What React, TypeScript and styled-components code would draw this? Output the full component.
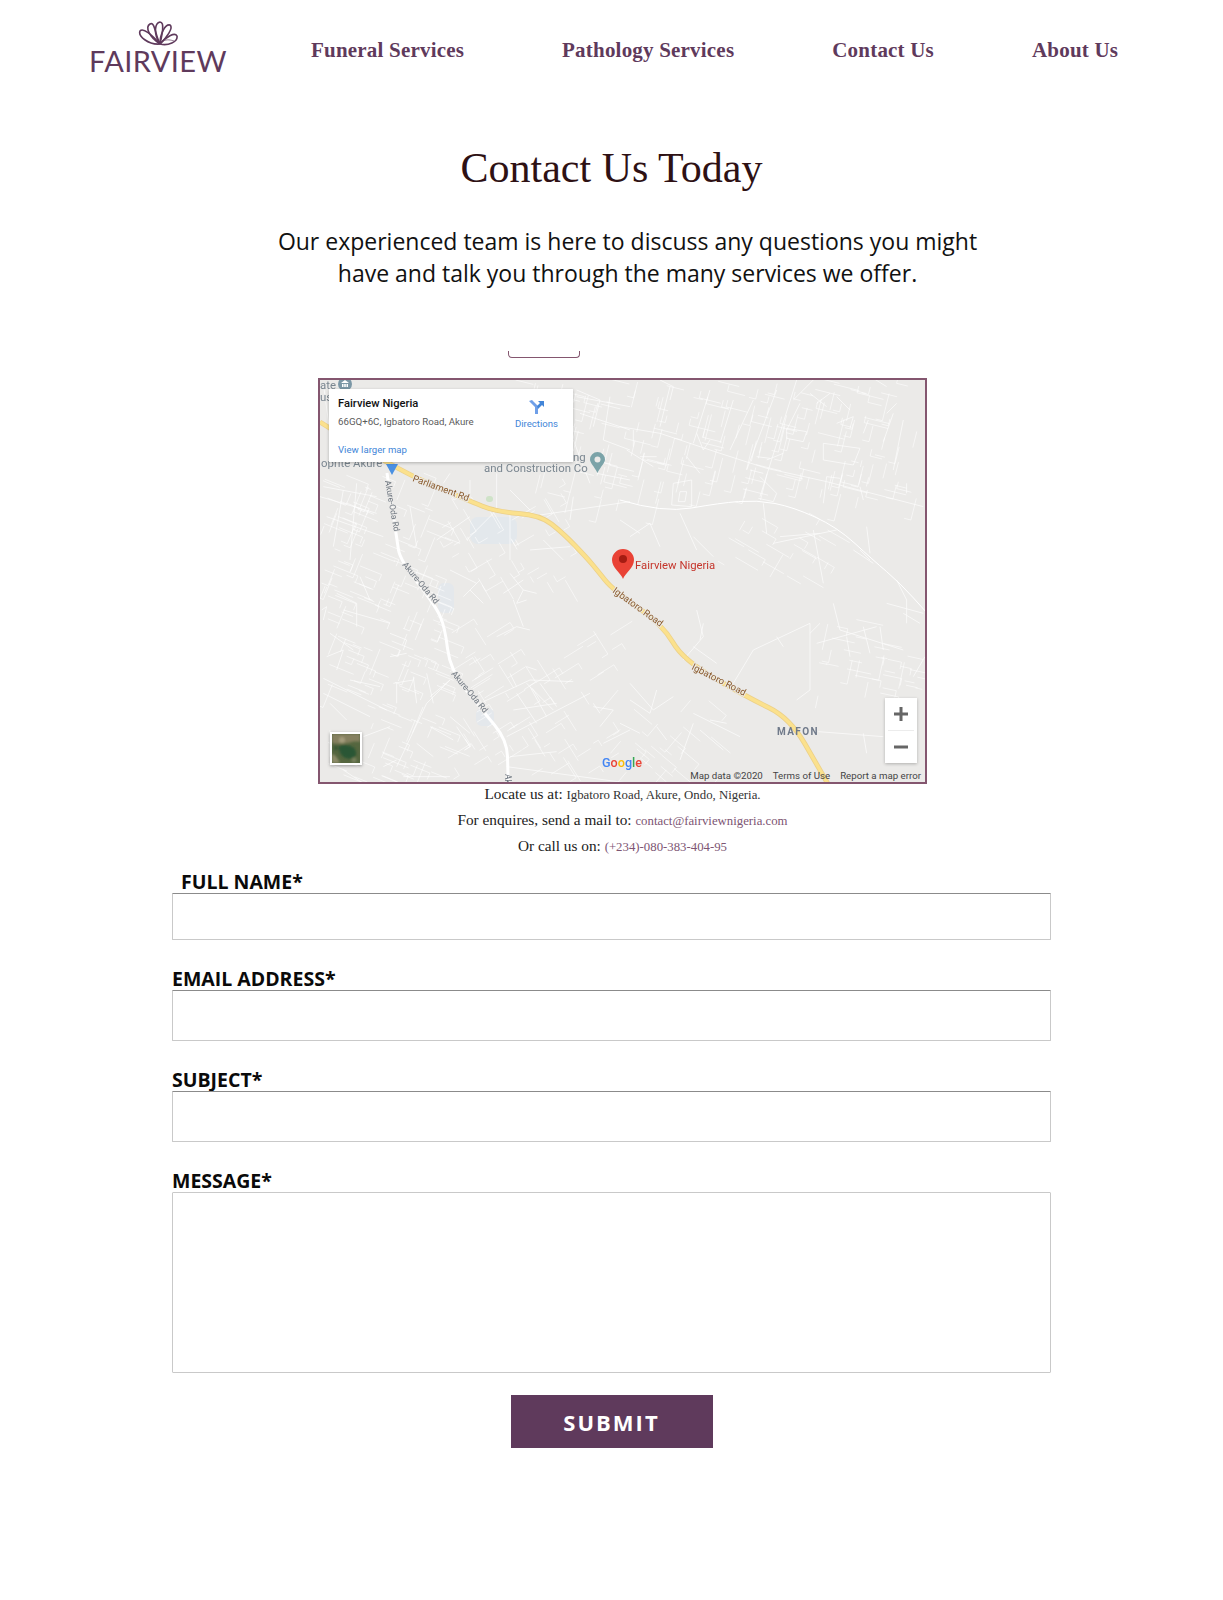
import styled, { createGlobalStyle } from 'styled-components';

const PLUM = '#5f3a5c';
const FRAME = '#84566f';

const NAV_ITEMS = ['Funeral Services', 'Pathology Services', 'Contact Us', 'About Us'];

// street lines read off the reference, in 3x crop coordinates per zone
const ZONE_A = [
  'M800 170L960 200', 'M810 220L960 270', 'M900 170L880 300', 'M800 150L870 180L850 260', 'M420 400L400 430',
  'M560 400L560 510', 'M690 525L960 485', 'M790 300L840 430', 'M480 420L480 490', 'M30 470L200 520',
  'M40 440L200 470', 'M600 450L660 510', 'M50 530L220 590', 'M100 450L70 620', 'M140 430L120 660',
  'M380 600L480 530', 'M470 600L560 510', 'M660 630L780 620', 'M700 600L760 660', 'M790 470L780 540',
  'M300 500L320 620', 'M600 520L600 660', 'M40 130L60 280', 'M880 300L960 330', 'M860 400L960 420',
];
const ZONE_B = [
  'M0 170L120 190L300 250L440 295L620 335L910 410', 'M530 30L420 380', 'M470 60L380 300', 'M400 90L330 240',
  'M340 90L300 220', 'M270 60L220 220', 'M150 50L120 170', 'M500 175L560 185L550 215L500 205Z',
  'M610 220L720 235L700 285L610 270Z', 'M160 340L215 330L215 410L155 405Z', 'M180 365L200 365L195 395L175 395Z',
  'M420 320L470 370L460 395L415 385', 'M430 400L440 490', 'M460 520L650 480', 'M480 500L600 490',
  'M580 480L610 640', 'M620 320L660 325', 'M620 320L610 400', 'M720 350L730 390', 'M800 130L830 100',
  'M820 300L850 150', 'M790 215L820 130', 'M730 190L745 150', 'M650 160L700 140L690 175', 'M520 90L590 20',
  'M720 0L800 50', 'M120 30L160 50L150 90', 'M230 190L250 240L270 210', 'M390 300L430 310', 'M410 260L450 265',
  'M440 270L490 250', 'M500 180L540 100', 'M570 70L620 110', 'M590 100L630 70', 'M0 450L60 490',
  'M30 500L90 460L120 530', 'M220 500L280 560', 'M180 430L230 540', 'M720 540L750 570', 'M740 470L750 550',
  'M700 540L760 580', 'M20 240L100 290', 'M40 180L40 230', 'M60 260L110 260', 'M200 260L240 310', 'M650 80L690 120',
  'M860 340L860 370',
];
const ZONE_C = [
  'M560 200L620 170L660 180', 'M610 90L640 170', 'M620 100L650 90', 'M640 60L680 70', 'M600 10L640 60L620 100',
  'M420 0L500 40', 'M510 30L460 80', 'M580 70L640 30', 'M360 380L420 330', 'M260 590L350 400L420 330',
  'M510 400L660 330L790 335', 'M590 500L840 370', 'M610 420L740 400', 'M650 290L680 300', 'M650 340L730 420',
  'M620 370L680 460', 'M660 350L710 440', 'M690 340L740 410', 'M600 310L620 350', 'M60 190L130 240',
  'M50 260L100 240L80 300', 'M240 190L290 210L280 240', 'M240 260L290 250', 'M35 120L50 110L40 150',
  'M80 70L140 100L140 170', 'M40 325L230 420', 'M60 400L110 450', 'M250 340L310 330', 'M260 340L260 400',
  'M310 320L320 400', 'M350 310L370 400', 'M360 470L430 510', 'M320 520L370 560', 'M440 470L480 530',
  'M590 590L960 640', 'M220 590L260 570', 'M100 600L160 640', 'M280 620L420 620', 'M420 440L480 490',
  'M600 560L740 545', 'M880 520L960 480', 'M850 410L910 420L870 470', 'M850 400L870 430', 'M100 120L240 160',
  'M150 20L180 90', 'M40 370L180 440', 'M160 500L240 470', 'M60 480L60 560', 'M120 330L210 350', 'M480 60L520 100',
];
const ZONE_D = [
  'M30 310L100 390', 'M30 360L90 400L110 330', 'M100 390L160 350', 'M110 440L140 480', 'M220 400L360 470',
  'M270 420L320 430', 'M240 450L310 510', 'M190 240L250 170L230 90', 'M220 200L290 250', 'M240 180L250 130',
  'M340 310L400 210L570 130', 'M470 170L490 200', 'M530 360L570 330L570 130', 'M590 190L770 140',
  'M640 70L660 150L850 210', 'M680 170L690 230', 'M730 140L750 220', 'M780 140L790 210', 'M830 0L860 60L860 130',
  'M800 70L910 100', 'M850 100L900 130', 'M880 290L915 230', 'M595 455L790 470', 'M730 460L740 520',
  'M180 540L220 430', 'M0 430L60 460', 'M600 130L570 160',
];

const ZONES = [
  { id: 'a', transform: 'translate(-8 -38) scale(.3333)', paths: ZONE_A },
  { id: 'b', transform: 'translate(302 -8) scale(.3333)', paths: ZONE_B },
  { id: 'c', transform: 'translate(-8 192) scale(.3333)', paths: ZONE_C },
  { id: 'd', transform: 'translate(302 202) scale(.3333)', paths: ZONE_D },
];

// fine side streets: short stubs scattered along the district's grid direction
const makeStreets = (x: number, y: number, w: number, h: number, angle: number, count: number, seed: number) => {
  let state = seed;
  const next = () => {
    state = (state * 16807) % 2147483647;
    return state / 2147483647;
  };
  let d = '';
  for (let i = 0; i < count; i++) {
    const px = x + next() * w;
    const py = y + next() * h;
    const dir = ((next() > 0.35 ? angle : angle + 90) * Math.PI) / 180;
    const len = 6 + next() * 22;
    const ex = px + Math.cos(dir) * len;
    const ey = py + Math.sin(dir) * len;
    d += `M${px.toFixed(1)} ${py.toFixed(1)}L${ex.toFixed(1)} ${ey.toFixed(1)}`;
    if (next() > 0.55) {
      const side = dir + Math.PI / 2;
      d += `L${(ex + Math.cos(side) * 7).toFixed(1)} ${(ey + Math.sin(side) * 7).toFixed(1)}`;
    }
  }
  return d;
};

const SIDE_STREETS = [
  makeStreets(215, 4, 385, 118, 104, 210, 11),
  makeStreets(5, 95, 125, 305, 22, 190, 23),
  makeStreets(130, 250, 170, 150, -32, 80, 37),
  makeStreets(130, 100, 120, 110, 60, 40, 41),
  makeStreets(500, 240, 105, 80, 12, 34, 53),
  makeStreets(400, 130, 120, 70, 30, 24, 59),
  makeStreets(300, 310, 120, 90, 40, 24, 61),
].join('');

const smoothPath = (points: number[][]) => {
  let d = `M${points[0].join(' ')}`;
  for (let i = 1; i < points.length - 1; i++) {
    const mx = (points[i][0] + points[i + 1][0]) / 2;
    const my = (points[i][1] + points[i + 1][1]) / 2;
    d += `Q${points[i].join(' ')} ${mx} ${my}`;
  }
  return `${d}L${points[points.length - 1].join(' ')}`;
};

const IGBATORO_ROAD = smoothPath([
  [2, 44], [75, 90], [149, 122], [179, 134], [222, 137], [245, 155], [269, 180], [279, 192], [295, 212],
  [345, 247], [365, 282], [429, 319], [472, 340], [502, 392], [510, 406],
]);
const ODA_ROAD = smoothPath([
  [69, 95], [79, 162], [82, 182], [117, 227], [127, 249], [132, 292], [164, 332], [189, 362], [190, 395], [190, 406],
]);
const NORTH_ROAD = smoothPath([
  [302, 122], [345, 135], [402, 125], [439, 122], [475, 129], [519, 149], [555, 182], [582, 205], [609, 235],
]);

const ROAD_LABELS = [
  { text: 'Parliament Rd', x: 94, y: 103, angle: 20, size: 9.5 },
  { text: 'Akure-Oda Rd', x: 67, y: 103, angle: 80, size: 8.5 },
  { text: 'Akure-Oda Rd', x: 84, y: 187, angle: 50, size: 8.5 },
  { text: 'Akure-Oda Rd', x: 133, y: 296, angle: 50, size: 8.5 },
  { text: 'Igbatoro Road', x: 294, y: 214, angle: 36, size: 9.5 },
  { text: 'Igbatoro Road', x: 373, y: 291, angle: 27, size: 9.5 },
];

const GlobalStyle = createGlobalStyle`
  body {
    margin: 0;
    background: #fff;
    font-family: 'Open Sans', sans-serif;
  }
`;

const Page = styled.div`
  width: 1223px;
  height: 1600px;
  overflow: hidden;
`;

const Header = styled.header`
  display: flex;
  align-items: center;
  height: 100px;
  padding-left: 90px;
`;

const Logo = styled.div`
  display: flex;
  flex-direction: column;
  align-items: center;
  width: 136px;
  margin-top: -6px;
`;

const LogoWord = styled.span`
  font-family: Lato, sans-serif;
  font-size: 29px;
  line-height: 25px;
  letter-spacing: 0.4px;
  color: ${PLUM};
  margin-top: 2px;
`;

const Nav = styled.nav`
  display: flex;
  gap: 98px;
  margin-left: 85px;
`;

const NavLink = styled.a`
  font-family: 'Liberation Serif', serif;
  font-size: 21px;
  font-weight: 700;
  letter-spacing: 0.2px;
  color: ${PLUM};
  white-space: nowrap;
`;

const Title = styled.h1`
  margin: 44px 0 0;
  text-align: center;
  font-family: 'Liberation Serif', serif;
  font-size: 42px;
  line-height: 48px;
  font-weight: 400;
  color: #2e1114;
`;

const Intro = styled.p`
  margin: 34px 0 0;
  padding-left: 32px;
  text-align: center;
  font-size: 23px;
  line-height: 31.5px;
  color: #111;
`;

const MapTab = styled.div`
  box-sizing: border-box;
  width: 72px;
  height: 7px;
  margin: 62px 0 0 508px;
  border: 1px solid ${FRAME};
  border-top: 0;
  border-radius: 0 0 4px 4px;
`;

const MapFrame = styled.div`
  position: relative;
  box-sizing: border-box;
  width: 609px;
  height: 406px;
  margin: 20px 0 0 318px;
  border: 2px solid ${FRAME};
  background: #ebeae8;
  overflow: hidden;
  font-family: Roboto, sans-serif;
`;

const MapDrawing = styled.svg`
  position: absolute;
  left: -2px;
  top: -2px;
  filter: blur(0.3px);
`;

const Popup = styled.div`
  position: absolute;
  left: 9px;
  top: 9px;
  width: 244px;
  height: 73px;
  box-sizing: border-box;
  padding: 8px 9px;
  background: #fff;
  box-shadow: 0 1px 3px rgba(0, 0, 0, 0.25);
`;

const PopupName = styled.div`
  font-size: 11.2px;
  line-height: 13px;
  font-weight: 500;
  color: #111;
`;

const PopupAddress = styled.div`
  margin-top: 6px;
  font-size: 9.7px;
  line-height: 12px;
  color: #5b5b5b;
`;

const PopupLink = styled.div`
  margin-top: 16px;
  font-size: 9.6px;
  line-height: 12px;
  color: #4285d8;
`;

const Directions = styled.div`
  position: absolute;
  right: 15px;
  top: 10px;
  display: flex;
  flex-direction: column;
  align-items: center;
  gap: 3px;
  font-size: 9.6px;
  line-height: 12px;
  color: #4285d8;
`;

const ZoomControl = styled.div`
  position: absolute;
  right: 8px;
  bottom: 19px;
  width: 32px;
  height: 65px;
  display: flex;
  flex-direction: column;
  align-items: center;
  background: #fff;
  box-shadow: 0 1px 3px rgba(0, 0, 0, 0.25);
`;

const ZoomButton = styled.div`
  width: 26px;
  height: 32px;
  display: flex;
  align-items: center;
  justify-content: center;
  & + & {
    border-top: 1px solid #ececec;
  }
`;

const Thumb = styled.svg`
  position: absolute;
  left: 10px;
  top: 352px;
  box-sizing: border-box;
  width: 32px;
  height: 33px;
  border: 2px solid #fff;
  box-shadow: 0 1px 3px rgba(0, 0, 0, 0.35);
`;

const Attribution = styled.div`
  position: absolute;
  right: 4px;
  bottom: 0;
  display: flex;
  gap: 10px;
  padding-left: 2px;
  font-size: 9.7px;
  line-height: 12px;
  color: #444;
`;

const Contacts = styled.div`
  display: flex;
  flex-direction: column;
  gap: 6px;
  width: 609px;
  margin-left: 318px;
  text-align: center;
`;

const ContactLine = styled.div`
  font-family: 'Liberation Serif', serif;
  font-size: 15.3px;
  line-height: 20px;
  color: #222;
`;

const ContactValue = styled.span<{ $link?: boolean }>`
  font-size: 12.8px;
  line-height: 1;
  color: ${(p) => (p.$link ? '#7d5573' : '#333')};
`;

const Form = styled.form`
  display: flex;
  flex-direction: column;
  gap: 25px;
  width: 879px;
  margin: 12px 0 0 172px;
`;

const Field = styled.div`
  display: flex;
  flex-direction: column;
`;

const Label = styled.label<{ $inset?: boolean }>`
  height: 25px;
  padding-left: ${(p) => (p.$inset ? '9px' : '0')};
  font-size: 19.5px;
  line-height: 27px;
  font-weight: 700;
  color: #0a0a0a;
`;

const TextInput = styled.input<{ $tall?: boolean }>`
  display: block;
  box-sizing: border-box;
  width: 100%;
  height: ${(p) => (p.$tall ? '51px' : '47px')};
  margin: 0;
  padding: 0 10px;
  background: #fff;
  border: 1px solid #c9c9c9;
  border-top-color: #8b8b8b;
  border-radius: 1px;
`;

const MessageInput = styled.textarea`
  display: block;
  box-sizing: border-box;
  width: 100%;
  height: 181px;
  margin: 0;
  padding: 10px;
  background: #fff;
  border: 1px solid #c9c9c9;
  border-radius: 1px;
  resize: none;
`;

const Submit = styled.button`
  align-self: center;
  width: 202px;
  height: 53px;
  margin-top: -3px;
  border: 0;
  background: ${PLUM};
  color: #fff;
  font-family: 'Open Sans', sans-serif;
  font-size: 22px;
  font-weight: 700;
  letter-spacing: 2px;
`;

const FlowerMark = () => (
  <svg width="40" height="25" viewBox="0 0 40 25" fill="none" stroke={PLUM} strokeWidth="1.6">
    <path d="M22 23C10 24 0 15 2 10 5 6 14 14 22 23" />
    <path d="M22 23C11 16 7 6 12 3 17 0 17 14 22 23" />
    <path d="M22 23C15 12 17 2 22 1 27 1 24 14 22 23" />
    <path d="M22 23C22 13 27 3 32 4 36 7 28 17 22 23" />
    <path d="M22 23C29 15 37 11 39 15 40 21 30 25 22 23" />
    <path d="M25 20C29 18 33 19 36 20" strokeWidth=".7" />
  </svg>
);

const RoadMap = () => (
  <MapDrawing width="609" height="406" viewBox="0 0 609 406">
    <rect x="152" y="139" width="47" height="27" rx="8" fill="#e3e8ec" />
    <rect x="120" y="205" width="16" height="30" rx="6" fill="#e4e8ec" />
    <rect x="158" y="330" width="18" height="18" rx="6" fill="#e4e8ec" />
    <rect x="168" y="118" width="7" height="6" rx="3" fill="#cfe3c8" />
    <path d={SIDE_STREETS} fill="none" stroke="#fff" strokeWidth=".8" opacity=".7" />
    {ZONES.map((zone) => (
      <g key={zone.id} transform={zone.transform} fill="none" stroke="#fff" strokeWidth="2.4" opacity=".8">
        {zone.paths.map((d) => (
          <path key={d} d={d} />
        ))}
      </g>
    ))}
    <path d={NORTH_ROAD} fill="none" stroke="#fff" strokeWidth="1" />
    <path d={ODA_ROAD} fill="none" stroke="#fff" strokeWidth="3" />
    <path d={IGBATORO_ROAD} fill="none" stroke="#ecd088" strokeWidth="5" />
    <path d={IGBATORO_ROAD} fill="none" stroke="#fbe18d" strokeWidth="3.4" />
    {ROAD_LABELS.map((label) => (
      <text
        key={`${label.text}${label.x}`}
        x={label.x}
        y={label.y}
        transform={`rotate(${label.angle} ${label.x} ${label.y})`}
        fontSize={label.size}
        fill={label.text.startsWith('Akure') ? '#6f7780' : '#8a5a2b'}
        stroke="#ebeae8"
        strokeWidth="2"
        paintOrder="stroke"
      >
        {label.text}
      </text>
    ))}
    <text x="187" y="396" transform="rotate(90 187 396)" fontSize="8.5" fill="#6f7780">Ak</text>
    <g fontSize="11.4" fill="#7a8690" stroke="#ebeae8" strokeWidth="1.5" paintOrder="stroke">
      <text x="2" y="11">ate</text>
      <text x="2" y="23">us</text>
      <text x="3" y="89">oprite Akure</text>
      <text x="255" y="83">ng</text>
      <text x="166" y="94">and Construction Co</text>
    </g>
    <circle cx="27" cy="6" r="7" fill="#7b97a6" />
    <path d="M23 5L27 2 31 5ZM24 6H25.5V9H24ZM26.2 6H27.8V9H26.2ZM28.5 6H30V9H28.5Z" fill="#fff" />
    <path d="M279.5 95C276 88 272 85 272 81.5A7.5 7.5 0 1 1 287 81.5C287 85 283 88 279.5 95Z" fill="#7ba3a8" />
    <circle cx="279.5" cy="81.5" r="3" fill="#ebeae8" />
    <path d="M68 86H80L74 97Z" fill="#4a90e2" />
    <path d="M305 201C303 195 294 190 294 182A11 11 0 1 1 316 182C316 190 307 195 305 201Z" fill="#e94235" />
    <circle cx="305" cy="181" r="4" fill="#a51c12" />
    <text x="317" y="191" fontSize="11.3" fill="#c5352b" stroke="#ebeae8" strokeWidth="2" paintOrder="stroke">
      Fairview Nigeria
    </text>
    <text x="459" y="357" fontSize="10" fontWeight="700" letterSpacing="1.4" fill="#707a8a">MAFON</text>
    <text x="284" y="389" fontSize="12.6" fontWeight="500">
      <tspan fill="#4285f4">G</tspan>
      <tspan fill="#ea4335">o</tspan>
      <tspan fill="#fbbc05">o</tspan>
      <tspan fill="#4285f4">g</tspan>
      <tspan fill="#34a853">l</tspan>
      <tspan fill="#ea4335">e</tspan>
    </text>
  </MapDrawing>
);

const DirectionsIcon = () => (
  <svg width="16" height="16" viewBox="0 0 16 16" fill="#6f9fe8">
    <path d="M1 2L7 8V15H10V7L4 1Z" />
    <path d="M9 7L12 4 10 2H16V8L14 6 10 10Z" fill="#4285d8" />
  </svg>
);

const SatelliteThumb = () => (
  <Thumb viewBox="0 0 28 29">
    <defs>
      <filter id="thumb-blur">
        <feGaussianBlur stdDeviation="1" />
      </filter>
    </defs>
    <rect width="28" height="29" fill="#55663f" />
    <g filter="url(#thumb-blur)">
      <path d="M0 0H28V8C20 6 14 12 0 9Z" fill="#85805f" />
      <path d="M7 12C14 9 26 12 24 21 20 28 6 25 7 12Z" fill="#2c5636" />
      <path d="M0 20C4 21 6 25 8 29H0Z" fill="#8c8a68" />
      <circle cx="10" cy="6" r="3" fill="#a39c7c" />
      <circle cx="22" cy="26" r="2.5" fill="#77805c" />
      <circle cx="4" cy="14" r="2.5" fill="#3c5a38" />
    </g>
  </Thumb>
);

const FormField = ({ label, inset, tall }: { label: string; inset?: boolean; tall?: boolean }) => (
  <Field>
    <Label $inset={inset}>{label}</Label>
    <TextInput $tall={tall} />
  </Field>
);

export default function App() {
  return (
    <Page>
      <GlobalStyle />
      <Header>
        <Logo>
          <FlowerMark />
          <LogoWord>FAIRVIEW</LogoWord>
        </Logo>
        <Nav>
          {NAV_ITEMS.map((item) => (
            <NavLink key={item}>{item}</NavLink>
          ))}
        </Nav>
      </Header>
      <Title>Contact Us Today</Title>
      <Intro>
        Our experienced team is here to discuss any questions you might
        <br />
        have and talk you through the many services we offer.
      </Intro>
      <MapTab />
      <MapFrame>
        <RoadMap />
        <Popup>
          <PopupName>Fairview Nigeria</PopupName>
          <PopupAddress>66GQ+6C, Igbatoro Road, Akure</PopupAddress>
          <PopupLink>View larger map</PopupLink>
          <Directions>
            <DirectionsIcon />
            Directions
          </Directions>
        </Popup>
        <SatelliteThumb />
        <ZoomControl>
          <ZoomButton>
            <svg width="16" height="16" viewBox="0 0 16 16" fill="#666">
              <path d="M6.5 1H9.5V6.5H15V9.5H9.5V15H6.5V9.5H1V6.5H6.5Z" />
            </svg>
          </ZoomButton>
          <ZoomButton>
            <svg width="16" height="16" viewBox="0 0 16 16" fill="#666">
              <path d="M1 6.5H15V9.5H1Z" />
            </svg>
          </ZoomButton>
        </ZoomControl>
        <Attribution>
          <span>Map data ©2020</span>
          <span>Terms of Use</span>
          <span>Report a map error</span>
        </Attribution>
      </MapFrame>
      <Contacts>
        <ContactLine>
          Locate us at: <ContactValue>Igbatoro Road, Akure, Ondo, Nigeria.</ContactValue>
        </ContactLine>
        <ContactLine>
          For enquires, send a mail to: <ContactValue $link>contact@fairviewnigeria.com</ContactValue>
        </ContactLine>
        <ContactLine>
          Or call us on: <ContactValue $link>(+234)-080-383-404-95</ContactValue>
        </ContactLine>
      </Contacts>
      <Form>
        <FormField label="FULL NAME*" inset />
        <FormField label="EMAIL ADDRESS*" tall />
        <FormField label="SUBJECT*" tall />
        <Field>
          <Label>MESSAGE*</Label>
          <MessageInput />
        </Field>
        <Submit type="button">SUBMIT</Submit>
      </Form>
    </Page>
  );
}
